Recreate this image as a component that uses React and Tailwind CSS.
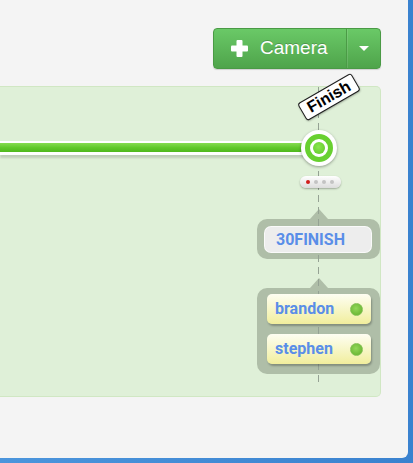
import React from "react";

const sans = { fontFamily: '"Liberation Sans", Arial, sans-serif' };
const roboto = { fontFamily: 'Roboto, "Liberation Sans", sans-serif' };

function PlusIcon() {
    return (
        <svg width="17" height="17" viewBox="0 0 17 17">
            <rect x="5.5" y="0" width="6" height="17" rx="1" fill="#fff" />
            <rect x="0" y="5.5" width="17" height="6" rx="1" fill="#fff" />
        </svg>
    );
}

function CameraButton() {
    return (
        <div className="flex h-[41px] rounded-[4px] border border-[#4a9a45] bg-gradient-to-b from-[#6ac967] to-[#4fa44b] shadow-[0_1px_1px_rgba(0,0,0,0.15)]">
            <button
                className="flex w-[132px] items-center pl-[17px] text-white text-[19px] [text-shadow:0_-1px_0_rgba(0,0,0,0.2)]"
                style={sans}
            >
                <PlusIcon />
                <span className="ml-[12px]">Camera</span>
            </button>
            <button className="flex w-[34px] items-center justify-center border-l border-[#4b9b46] shadow-[inset_1px_0_0_rgba(255,255,255,0.12)]">
                <span className="block h-0 w-0 border-x-[5px] border-t-[5px] border-x-transparent border-t-white" />
            </button>
        </div>
    );
}

function Pointer() {
    return (
        <div className="h-0 w-0 border-x-[9px] border-b-[10px] border-x-transparent border-b-[#afbea8]" />
    );
}

function Person({ name }) {
    return (
        <div className="relative z-20 flex h-[30px] items-center justify-between rounded-[5px] bg-gradient-to-b from-[#fefef2] to-[#f1ee9c] pl-[8px] pr-[8px] shadow-[1px_2px_2px_rgba(0,0,0,0.25)]">
            <span className="text-[16px] font-bold text-[#5a8ee8]" style={roboto}>
                {name}
            </span>
            <span className="h-[13px] w-[13px] rounded-full border border-[#86c257] bg-[radial-gradient(circle_at_45%_40%,#93d858,#5fad2a)]" />
        </div>
    );
}

function Marker() {
    return (
        <div className="relative flex w-[123px] flex-col items-center">
            {/* dashed guide down the finish line */}
            <div className="absolute left-[61px] top-0 bottom-[11px] z-10 w-px bg-[repeating-linear-gradient(to_bottom,#95a294_0_7px,transparent_7px_12px)]" />

            <div
                className="relative z-20 flex h-[20px] w-[62px] translate-x-[10px] -rotate-[30deg] items-center justify-center rounded-[3px] border border-[#1e1e1e] bg-white text-[16px] font-bold leading-none text-black shadow-[0_1px_2px_rgba(0,0,0,0.3)]"
                style={sans}
            >
                Finish
            </div>

            <div className="relative z-20 mt-[23px] flex h-[36px] w-[36px] items-center justify-center rounded-full bg-white shadow-[0_1px_3px_rgba(0,0,0,0.35)]">
                <div className="flex h-[28px] w-[28px] items-center justify-center rounded-full border-[5px] border-[#68d030] bg-white">
                    <div className="h-[12px] w-[12px] rounded-full bg-[radial-gradient(circle_at_45%_40%,#8ae551,#5cc823)]" />
                </div>
            </div>

            <div className="relative z-20 mt-[10px] flex h-[12px] w-[41px] translate-x-[2px] items-center gap-[4px] rounded-full bg-gradient-to-b from-white to-[#dcdcdc] pl-[6px] shadow-[0_1px_2px_rgba(0,0,0,0.3)]">
                <span className="h-[4px] w-[4px] rounded-full bg-[#d11c1c]" />
                <span className="h-[4px] w-[4px] rounded-full bg-[#c3c3c3]" />
                <span className="h-[4px] w-[4px] rounded-full bg-[#c3c3c3]" />
                <span className="h-[4px] w-[4px] rounded-full bg-[#c3c3c3]" />
            </div>

            <div className="mt-[21px]">
                <Pointer />
            </div>
            <div className="w-full rounded-[10px] bg-[#afbea8] pb-[6px] pl-[7px] pr-[8px] pt-[7px]">
                <div
                    className="relative z-20 flex h-[27px] items-center rounded-[7px] border border-white/70 bg-[#ededed] pl-[11px] text-[16px] font-bold text-[#5a8ee8]"
                    style={roboto}
                >
                    30FINISH
                </div>
            </div>

            <div className="mt-[19px]">
                <Pointer />
            </div>
            <div className="flex w-full flex-col gap-[10px] rounded-[10px] bg-[#afbea8] pb-[10px] pl-[10px] pr-[9px] pt-[6px]">
                <Person name="brandon" />
                <Person name="stephen" />
            </div>
        </div>
    );
}

export default function App() {
    return (
        <div className="h-[463px] w-[413px] bg-gradient-to-r from-[#4b95dc] to-[#3a82cf]">
            <div className="h-[458px] w-[408px] rounded-br-[6px] bg-[#f4f4f4] pt-[28px]">
                <div className="flex justify-end pr-[27px]">
                    <CameraButton />
                </div>

                <div className="mt-[17px] flex h-[311px] w-[381px] rounded-r-[5px] border border-l-0 border-[#d0e7c3] bg-[#dff0d8]">
                    <div className="flex-1">
                        <div className="relative mr-[-47px] mt-[54px] h-[14px] bg-white pt-[2px] shadow-[0_3px_2px_rgba(0,0,0,0.14)]">
                            <div className="h-[9px] bg-gradient-to-b from-[#86dc50] via-[#62c92c] to-[#4fb81d]" />
                        </div>
                    </div>
                    <Marker />
                </div>
            </div>
        </div>
    );
}
